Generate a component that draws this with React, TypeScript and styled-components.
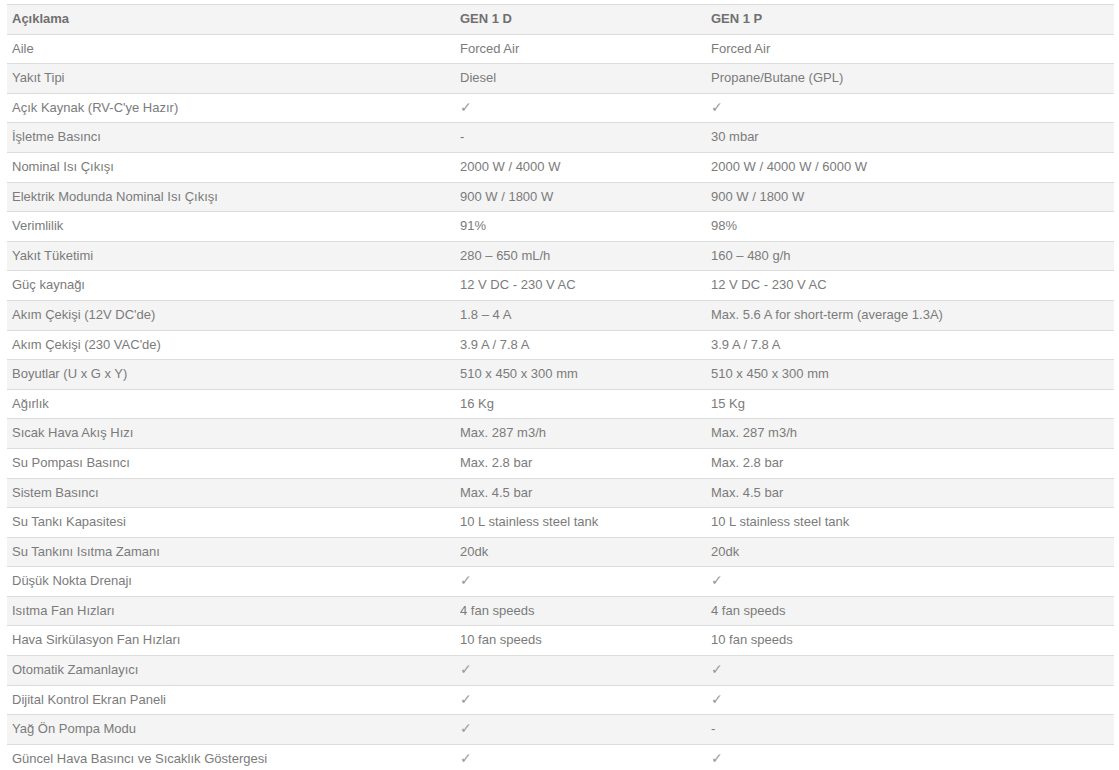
import React from "react";
import styled, { createGlobalStyle } from "styled-components";

const Global = createGlobalStyle`
  html, body { margin: 0; padding: 0; background: #fff; }
  body { font-family: "Liberation Sans", Arial, sans-serif; }
`;

const Page = styled.div`
  padding: 4px 5px 0 7px;
`;

const Table = styled.div`
  display: grid;
  grid-template-columns: 448px 251px 1fr;
  border-top: 1px solid #dcdcdc;
`;

const Row = styled.div<{ $shade: boolean }>`
  display: contents;
  & > div {
    background: ${(p) => (p.$shade ? "#f4f4f4" : "#fff")};
  }
`;

const Cell = styled.div<{ $head?: boolean }>`
  padding: 5px 5px;
  line-height: 18.6px;
  font-size: 13px;
  color: ${(p) => (p.$head ? "#707070" : "#7b7b7b")};
  font-weight: ${(p) => (p.$head ? 700 : 400)};
  border-bottom: 1px solid #dcdcdc;
  white-space: nowrap;
`;

const Check = styled.span`
  color: #9a9a9a;
  font-family: "DejaVu Sans", sans-serif;
  font-size: 14px;
  line-height: 1;
`;

const CK = "✓";

const rows: [string, string, string][] = [
  ["Aile", "Forced Air", "Forced Air"],
  ["Yakıt Tipi", "Diesel", "Propane/Butane (GPL)"],
  ["Açık Kaynak (RV-C'ye Hazır)", CK, CK],
  ["İşletme Basıncı", "-", "30 mbar"],
  ["Nominal Isı Çıkışı", "2000 W / 4000 W", "2000 W / 4000 W / 6000 W"],
  ["Elektrik Modunda Nominal Isı Çıkışı", "900 W / 1800 W", "900 W / 1800 W"],
  ["Verimlilik", "91%", "98%"],
  ["Yakıt Tüketimi", "280 – 650 mL/h", "160 – 480 g/h"],
  ["Güç kaynağı", "12 V DC - 230 V AC", "12 V DC - 230 V AC"],
  ["Akım Çekişi (12V DC'de)", "1.8 – 4 A", "Max. 5.6 A for short-term (average 1.3A)"],
  ["Akım Çekişi (230 VAC'de)", "3.9 A / 7.8 A", "3.9 A / 7.8 A"],
  ["Boyutlar (U x G x Y)", "510 x 450 x 300 mm", "510 x 450 x 300 mm"],
  ["Ağırlık", "16 Kg", "15 Kg"],
  ["Sıcak Hava Akış Hızı", "Max. 287 m3/h", "Max. 287 m3/h"],
  ["Su Pompası Basıncı", "Max. 2.8 bar", "Max. 2.8 bar"],
  ["Sistem Basıncı", "Max. 4.5 bar", "Max. 4.5 bar"],
  ["Su Tankı Kapasitesi", "10 L stainless steel tank", "10 L stainless steel tank"],
  ["Su Tankını Isıtma Zamanı", "20dk", "20dk"],
  ["Düşük Nokta Drenajı", CK, CK],
  ["Isıtma Fan Hızları", "4 fan speeds", "4 fan speeds"],
  ["Hava Sirkülasyon Fan Hızları", "10 fan speeds", "10 fan speeds"],
  ["Otomatik Zamanlayıcı", CK, CK],
  ["Dijital Kontrol Ekran Paneli", CK, CK],
  ["Yağ Ön Pompa Modu", CK, "-"],
  ["Güncel Hava Basıncı ve Sıcaklık Göstergesi", CK, CK],
];

const val = (v: string) => (v === CK ? <Check>{CK}</Check> : v);

export default function App() {
  return (
    <>
      <Global />
      <Page>
        <Table>
          <Row $shade>
            <Cell $head>Açıklama</Cell>
            <Cell $head>GEN 1 D</Cell>
            <Cell $head>GEN 1 P</Cell>
          </Row>
          {rows.map((r, i) => (
            <Row key={i} $shade={i % 2 === 1}>
              <Cell>{r[0]}</Cell>
              <Cell>{val(r[1])}</Cell>
              <Cell>{val(r[2])}</Cell>
            </Row>
          ))}
        </Table>
      </Page>
    </>
  );
}
